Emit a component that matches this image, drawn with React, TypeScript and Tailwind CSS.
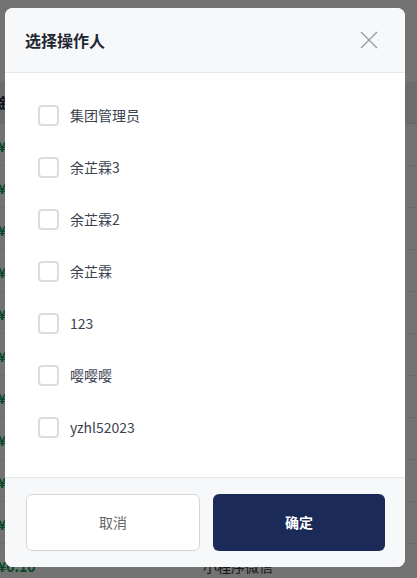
import React from "react";

const names = ["集团管理员", "余芷霖3", "余芷霖2", "余芷霖", "123", "嘤嘤嘤", "yzhl52023"];
const font = { fontFamily: '"Noto Sans CJK SC", "Noto Sans", sans-serif' };

export default function App() {
  return (
    <div className="relative w-[417px] h-[578px] overflow-hidden bg-white" style={font}>
      {/* page behind the dialog */}
      <div className="pt-[82px]">
        <div className="h-[42px] flex items-center bg-[#eef0f3] border-b border-[#e3e5e8] -ml-[4px]">
          <span className="text-[14px] font-bold text-[#1f2a44]">金额</span>
        </div>
        {Array.from({ length: 11 }).map((_, i) => (
          <div key={i} className="h-[42px] flex items-center border-b border-[#eceef1] pt-[4px]">
            <span className="w-[205px] -ml-[2px] text-[14px] font-semibold text-[#12a05a]">¥0.10</span>
            <span className="text-[14px] text-[#333]">小程序微信</span>
          </div>
        ))}
      </div>
      <div className="absolute inset-0 bg-black/55" />

      {/* dialog */}
      <div className="absolute left-[5px] top-[8px] w-[400px] h-[559px] rounded-[8px] overflow-hidden bg-white flex flex-col">
        <div className="h-[65px] shrink-0 bg-[#f7f8fa] border-b border-[#e4e7eb] flex items-center justify-between pl-[20px] pr-[26px]">
          <span className="text-[16px] font-bold text-[#1f2733]">选择操作人</span>
          <svg width="20" height="20" viewBox="0 0 20 20">
            <path d="M2 2L18 18M18 2L2 18" stroke="#9a9fa6" strokeWidth="1.4" fill="none" />
          </svg>
        </div>
        <div className="flex-1 pt-[16px] pl-[33px]">
          {names.map((n) => (
            <div key={n} className="h-[52px] flex items-center gap-[11px]">
              <div className="w-[21px] h-[21px] rounded-[4px] border-2 border-[#dadddd] bg-white" />
              <span className="text-[14px] text-[#3b4350]">{n}</span>
            </div>
          ))}
        </div>
        <div className="h-[90px] shrink-0 bg-[#f7f8fa] border-t border-[#e4e7eb] flex items-center gap-[13px] pl-[21px] pr-[20px]">
          <button className="flex-1 h-[57px] rounded-[6px] border-[1.5px] border-[#d6d6d6] bg-white text-[14px] text-[#666]">
            取消
          </button>
          <button className="flex-1 h-[57px] rounded-[6px] bg-[#1b2a56] text-[14px] font-bold text-white">
            确定
          </button>
        </div>
      </div>
    </div>
  );
}
